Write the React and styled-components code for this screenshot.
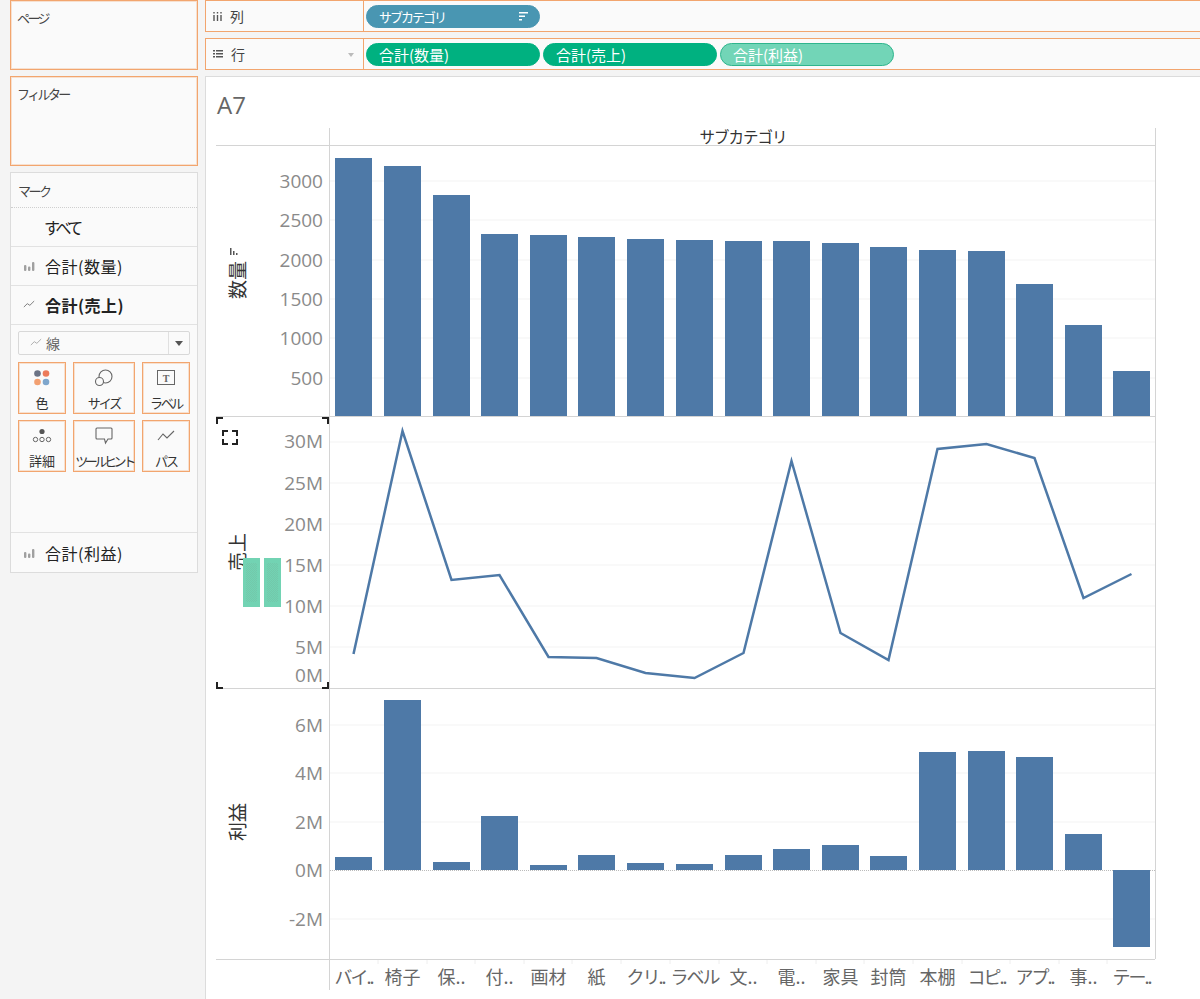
import styled, { createGlobalStyle } from 'styled-components';

const GlobalStyle = createGlobalStyle`
  html, body {
    margin: 0;
    height: 999px;
    overflow: hidden;
    background: #f4f4f4;
    font-family: "Noto Sans CJK JP", "Open Sans", sans-serif;
  }
`;

const ORANGE = '#f2a56e';
const BAR = '#4e79a7';

const categories = ['バイ..', '椅子', '保..', '付..', '画材', '紙', 'クリ..', 'ラベル', '文..', '電..', '家具', '封筒', '本棚', 'コピ..', 'アプ..', '事..', 'テー..'];
const barLeft = [335, 384, 433, 481, 530, 578, 627, 676, 725, 773, 822, 870, 919, 968, 1016, 1065, 1113];
const quantityTops = [158, 166, 195, 234, 235, 237, 239, 240, 241, 241, 243, 247, 250, 251, 284, 325, 371];
const salesY = [654, 431, 580, 575, 657, 658, 673, 678, 653, 461, 633, 660, 449, 444, 458, 598, 574];
const profitTops = [857, 700, 862, 816, 865, 855, 863, 864, 855, 849, 845, 856, 752, 751, 757, 834, 870];

const quantityTicks = [[3000, 181], [2500, 220], [2000, 260], [1500, 299], [1000, 338], [500, 378]];
const salesTicks = [['30M', 442, 441], ['25M', 483, 483], ['20M', 524, 524], ['15M', 565, 565], ['10M', 606, 606], ['5M', 647, 647], ['0M', 688, 675]];
const profitTicks = [['6M', 725], ['4M', 773], ['2M', 822], ['0M', 870], ['-2M', 919]];

const isKana = (text) => /[ァ-ヶー]/.test(text);

const BarGlyph = () => (
  <svg width="12" height="12" viewBox="0 0 12 12">
    <rect x="1" y="5" width="2.4" height="6" rx="1" fill="#a0a0a0" />
    <rect x="5" y="6.500" width="2.4" height="4.500" rx="1" fill="#a0a0a0" />
    <rect x="9" y="2" width="2.4" height="9" rx="1" fill="#a0a0a0" />
  </svg>
);

const LineGlyph = ({ color = '#777' }) => (
  <svg width="12" height="9" viewBox="0 0 14 10">
    <path d="M1 8 L5 4 L8 6 L13 1" fill="none" stroke={color} strokeWidth="1.1" />
  </svg>
);

const ColorIcon = () => (
  <svg width="18" height="18" viewBox="0 0 18 18">
    <circle cx="4.500" cy="4.500" r="3.300" fill="#6b7385" />
    <circle cx="13" cy="4.500" r="3.300" fill="#ec7b5b" />
    <circle cx="4.500" cy="13" r="3.300" fill="#f2a071" />
    <circle cx="13" cy="13" r="3.300" fill="#7ea6cc" />
  </svg>
);

const SizeIcon = () => (
  <svg width="20" height="18" viewBox="0 0 20 18">
    <circle cx="11.500" cy="7.500" r="6.500" fill="none" stroke="#666" strokeWidth="1.1" />
    <circle cx="5.500" cy="12.500" r="4" fill="#fafafa" stroke="#666" strokeWidth="1.1" />
  </svg>
);

const LabelIcon = () => (
  <svg width="18" height="16" viewBox="0 0 18 16">
    <rect x="0.500" y="0.500" width="17" height="14" fill="none" stroke="#666" />
    <text x="9" y="11.500" fontSize="10" fontWeight="700" textAnchor="middle" fill="#666" fontFamily="Liberation Serif, serif">T</text>
  </svg>
);

const DetailIcon = () => (
  <svg width="20" height="16" viewBox="0 0 20 16">
    <circle cx="10" cy="3.500" r="2.600" fill="#555" />
    <circle cx="3.500" cy="11.500" r="2.200" fill="none" stroke="#666" />
    <circle cx="10" cy="11.500" r="2.200" fill="none" stroke="#666" />
    <circle cx="16.500" cy="11.500" r="2.200" fill="none" stroke="#666" />
  </svg>
);

const TooltipIcon = () => (
  <svg width="18" height="18" viewBox="0 0 18 18">
    <path d="M2 1 H16 Q17 1 17 2 V11 Q17 12 16 12 H13 L10.500 16 L9.500 12 H2 Q1 12 1 11 V2 Q1 1 2 1 Z" fill="none" stroke="#666" strokeWidth="1.1" />
  </svg>
);

const PathIcon = () => (
  <svg width="18" height="14" viewBox="0 0 18 14">
    <path d="M1 11 L6 5 L10 9 L17 2" fill="none" stroke="#666" strokeWidth="1.1" />
  </svg>
);

const ColumnsIcon = () => (
  <svg width="9" height="9" viewBox="0 0 9 9">
    <path d="M0.300 0h1.400v1.500H0.300zM3.800 0h1.400v1.500H3.800zM7.300 0h1.400v1.500H7.300z" fill="#555" />
    <path d="M0.300 3h1.400v6H0.300zM3.800 3h1.400v6H3.800zM7.300 3h1.400v6H7.300z" fill="#555" />
  </svg>
);

const RowsIcon = () => (
  <svg width="10" height="8" viewBox="0 0 10 8">
    <path d="M0 0h2v1.500H0zM0 3h2v1.500H0zM0 6h2v1.500H0zM3 0h7v1.500H3zM3 3h7v1.500H3zM3 6h7v1.500H3z" fill="#555" />
  </svg>
);

const SortIcon = () => (
  <svg width="9" height="9" viewBox="0 0 9 9">
    <path d="M0 0h9v1.500H0zM0 3.500h6V5H0zM0 7h3v1.500H0z" fill="#fff" />
  </svg>
);

const markButtons = [
  { label: '色', icon: <ColorIcon /> },
  { label: 'サイズ', icon: <SizeIcon />, spacing: -2 },
  { label: 'ラベル', icon: <LabelIcon />, spacing: -2.400 },
  { label: '詳細', icon: <DetailIcon /> },
  { label: 'ツールヒント', icon: <TooltipIcon />, spacing: -3.400 },
  { label: 'パス', icon: <PathIcon />, spacing: -2 },
];

const Chart = () => (
  <ChartSvg width="995" height="873" viewBox="205 126 995 873">
    {/* gridlines */}
    {quantityTicks.map(([, y]) => <line key={y} x1="330" x2="1155" y1={y} y2={y} stroke="#f3f3f3" />)}
    {salesTicks.slice(0, 6).map(([, y]) => <line key={y} x1="330" x2="1155" y1={y} y2={y} stroke="#f3f3f3" />)}
    {[725, 773, 822, 919].map((y) => <line key={y} x1="330" x2="1155" y1={y} y2={y} stroke="#f3f3f3" />)}

    {/* panes */}
    <line x1="216" x2="1155" y1="145.500" y2="145.500" stroke="#d4d4d4" />
    <line x1="216" x2="1155" y1="416.500" y2="416.500" stroke="#d4d4d4" />
    <line x1="216" x2="1155" y1="688.500" y2="688.500" stroke="#d4d4d4" />
    <line x1="216" x2="1155" y1="959.500" y2="959.500" stroke="#d4d4d4" />
    <line x1="329.500" x2="329.500" y1="128" y2="990" stroke="#d4d4d4" />
    <line x1="1155.500" x2="1155.500" y1="128" y2="959" stroke="#d4d4d4" />
    <line x1="330" x2="1155" y1="870.500" y2="870.500" stroke="#bbb" strokeDasharray="1 1" />
    {barLeft.slice(1).map((x) => <line key={x} x1={x - 6} x2={x - 6} y1="960" y2="964" stroke="#eee" />)}

    {/* bars and line */}
    {barLeft.map((x, i) => <rect key={x} x={x} y={quantityTops[i]} width="37" height={416 - quantityTops[i]} fill={BAR} />)}
    <polyline
      points={barLeft.map((x, i) => `${x + 18.5},${salesY[i]}`).join(' ')}
      fill="none"
      stroke={BAR}
      strokeWidth="2.500"
    />
    {barLeft.map((x, i) => <rect key={x} x={x} y={profitTops[i]} width="37" height={870 - profitTops[i]} fill={BAR} />)}
    <rect x="1113" y="870" width="37" height="77" fill={BAR} />

    {/* axes */}
    {quantityTicks.map(([v, y]) => <Tick key={v} x="323" y={y}>{v}</Tick>)}
    {salesTicks.map(([v, , y]) => <Tick key={v} x="323" y={y}>{v}</Tick>)}
    {profitTicks.map(([v, y]) => <Tick key={v} x="323" y={y}>{v}</Tick>)}

    <AxisTitle transform="rotate(-90 236 280)" x="236" y="280">数量</AxisTitle>
    <path d="M230 255v-7h1.500v7zM233 255v-4h1.500v4zM236 255v-2h1.500v2z" fill="#555" />
    <AxisTitle transform="rotate(-90 236 552)" x="236" y="552">売上</AxisTitle>
    <AxisTitle transform="rotate(-90 236 822)" x="236" y="822">利益</AxisTitle>

    <Header x="743" y="136">サブカテゴリ</Header>
    {categories.map((c, i) => (
      <Category key={c} x={barLeft[i] + 18.5} y="976" $kana={isKana(c)}>{c}</Category>
    ))}
  </ChartSvg>
);

const CORNERS = ['M0 6V0H6', 'M105 0H111V6', 'M0 264V270H6', 'M105 270H111V264'];
const FOCUS = ['M6 18V13H11', 'M15 13H20V18', 'M6 21V26H11', 'M15 26H20V21'];

const App = () => (
  <>
    <GlobalStyle />
    <Page>
      <Sidebar>
        <DropCard $height={70}>ページ</DropCard>
        <DropCard $height={90}>フィルター</DropCard>
        <MarksCard>
          <MarksTitle>マーク</MarksTitle>
          <MarkRow $kana>すべて</MarkRow>
          <MarkRow><BarGlyph />合計(数量)</MarkRow>
          <MarkRow $bold><LineGlyph />合計(売上)</MarkRow>
          <MarkPanel>
            <MarkSelect>
              <SelectValue><LineGlyph color="#aaa" />線</SelectValue>
              <SelectCaret />
            </MarkSelect>
            <MarkButtons>
              {markButtons.map((b) => (
                <MarkButton key={b.label} $spacing={b.spacing}>
                  <IconSlot>{b.icon}</IconSlot>
                  {b.label}
                </MarkButton>
              ))}
            </MarkButtons>
          </MarkPanel>
          <MarkRow><BarGlyph />合計(利益)</MarkRow>
        </MarksCard>
      </Sidebar>
      <Main>
        <Shelf>
          <ShelfLabel><ColumnsIcon />列</ShelfLabel>
          <Pills>
            <Pill $bg="#4996b2" $kana>サブカテゴリ<PillIcon><SortIcon /></PillIcon></Pill>
          </Pills>
        </Shelf>
        <Shelf>
          <ShelfLabel><RowsIcon />行<ShelfCaret /></ShelfLabel>
          <Pills>
            <Pill $bg="#00b180">合計(数量)</Pill>
            <Pill $bg="#00b180">合計(売上)</Pill>
            <Pill $bg="#72d5b7" $border="#2fb58d">合計(利益)</Pill>
          </Pills>
        </Shelf>
        <Viz>
          <VizTitle>A7</VizTitle>
          <Chart />
          <SelectionMarks width="113" height="272" viewBox="-1 -1 113 272">
            {CORNERS.map((d) => <path key={d} d={d} fill="none" stroke="#222" strokeWidth="2" />)}
            {FOCUS.map((d) => <path key={d} d={d} fill="none" stroke="#222" strokeWidth="2" />)}
          </SelectionMarks>
          <DragGhost $left={37} />
          <DragGhost $left={58} />
        </Viz>
      </Main>
    </Page>
  </>
);

const Page = styled.div`
  display: flex;
  gap: 7px;
  height: 999px;
  padding-left: 10px;
  box-sizing: border-box;
`;

const Sidebar = styled.aside`
  width: 188px;
  flex: none;
  display: flex;
  flex-direction: column;
  gap: 6px;
`;

const DropCard = styled.div`
  height: ${(p) => p.$height}px;
  box-sizing: border-box;
  border: 1px solid ${ORANGE};
  box-shadow: inset 0 0 0 1px rgba(242, 165, 110, 0.3);
  background: #fafafa;
  padding: 8px 6px;
  font-size: 13px;
  line-height: 18px;
  letter-spacing: -2.600px;
  color: #444;
`;

const MarksCard = styled.section`
  height: 401px;
  box-sizing: border-box;
  border: 1px solid #dcdcdc;
  background: #fafafa;
  display: flex;
  flex-direction: column;
`;

const MarksTitle = styled.div`
  height: 35px;
  box-sizing: border-box;
  padding: 9px 7px;
  font-size: 13px;
  line-height: 18px;
  letter-spacing: -2.500px;
  color: #444;
  border-bottom: 1px dotted #cfcfcf;
`;

const MarkRow = styled.div`
  height: 39px;
  box-sizing: border-box;
  display: flex;
  align-items: center;
  gap: 10px;
  padding-left: ${(p) => (p.$kana ? 33 : 12)}px;
  font-size: 16px;
  letter-spacing: ${(p) => (p.$kana ? '-3.500px' : '0.5px')};
  font-weight: ${(p) => (p.$bold ? 700 : 400)};
  color: #222;
  border-bottom: 1px solid #e2e2e2;

  &:last-child {
    border-bottom: none;
  }
`;

const MarkPanel = styled.div`
  height: 209px;
  box-sizing: border-box;
  padding: 6px 7px;
  border-bottom: 1px solid #e2e2e2;
`;

const MarkSelect = styled.div`
  height: 24px;
  box-sizing: border-box;
  border: 1px solid #d8d8d8;
  border-radius: 2px;
  display: flex;
  align-items: stretch;
`;

const SelectValue = styled.div`
  flex: 1;
  display: flex;
  align-items: center;
  gap: 4px;
  padding-left: 11px;
  font-size: 14px;
  color: #666;
`;

const SelectCaret = styled.div`
  width: 20px;
  border-left: 1px solid #e0e0e0;
  position: relative;

  &::after {
    content: '';
    position: absolute;
    left: 6px;
    top: 9px;
    border: 4px solid transparent;
    border-top: 5px solid #555;
    border-bottom: none;
  }
`;

const MarkButtons = styled.div`
  display: grid;
  grid-template-columns: 48px 62px 48px;
  grid-auto-rows: 52px;
  column-gap: 7px;
  row-gap: 6px;
  margin-top: 7px;
`;

const MarkButton = styled.div`
  box-sizing: border-box;
  border: 1px solid ${ORANGE};
  box-shadow: inset 0 0 0 1px rgba(242, 165, 110, 0.3);
  display: flex;
  flex-direction: column;
  align-items: center;
  font-size: 13px;
  line-height: 17px;
  letter-spacing: ${(p) => p.$spacing || 0}px;
  white-space: nowrap;
  color: #333;
`;

const IconSlot = styled.div`
  height: 31px;
  display: flex;
  align-items: center;
  justify-content: center;
  letter-spacing: 0;
`;

const Main = styled.main`
  flex: 1;
  min-width: 0;
  display: flex;
  flex-direction: column;
  gap: 6px;
`;

const Shelf = styled.div`
  height: 32px;
  flex: none;
  box-sizing: border-box;
  display: flex;
  background: #fafafa;
  border: 1px solid ${ORANGE};
  border-right: none;
`;

const ShelfLabel = styled.div`
  width: 158px;
  box-sizing: border-box;
  flex: none;
  position: relative;
  display: flex;
  align-items: center;
  gap: 8px;
  padding-left: 7px;
  font-size: 14px;
  color: #444;
  border-right: 1px solid ${ORANGE};
`;

const ShelfCaret = styled.span`
  position: absolute;
  right: 9px;
  top: 14px;
  border: 3.500px solid transparent;
  border-top: 4px solid #bbb;
  border-bottom: none;
`;

const Pills = styled.div`
  display: flex;
  align-items: center;
  gap: 3px;
  padding-left: 2px;
`;

const Pill = styled.div`
  width: 174px;
  height: 23px;
  box-sizing: border-box;
  position: relative;
  display: flex;
  align-items: center;
  padding-left: 12px;
  border-radius: 12px;
  background: ${(p) => p.$bg};
  border: 1px solid ${(p) => p.$border || p.$bg};
  color: #fff;
  font-size: ${(p) => (p.$kana ? 13 : 15)}px;
  letter-spacing: ${(p) => (p.$kana ? '-2px' : '0')};
`;

const PillIcon = styled.span`
  position: absolute;
  right: 11px;
  top: 6px;
  line-height: 0;
`;

const Viz = styled.div`
  flex: 1;
  position: relative;
  background: #fff;
  border-top: 1px solid #dcdcdc;
  border-left: 1px solid #dcdcdc;
`;

const VizTitle = styled.div`
  height: 49px;
  box-sizing: border-box;
  padding: 13px 0 0 11px;
  font-family: "Open Sans", sans-serif;
  font-size: 24px;
  line-height: 30px;
  color: #666;
`;

const ChartSvg = styled.svg`
  display: block;
  margin-left: -1px;
`;

const Tick = styled.text`
  font-family: "Open Sans", sans-serif;
  font-size: 19px;
  fill: #8a8a8a;
  text-anchor: end;
  dominant-baseline: central;
`;

const AxisTitle = styled.text`
  font-size: 19px;
  fill: #333;
  text-anchor: middle;
  dominant-baseline: central;
`;

const Header = styled.text`
  font-size: 15.500px;
  letter-spacing: -1px;
  fill: #333;
  text-anchor: middle;
  dominant-baseline: central;
`;

const Category = styled.text`
  font-size: 18px;
  letter-spacing: ${(p) => (p.$kana ? '-2px' : '0')};
  fill: #666;
  text-anchor: middle;
  dominant-baseline: central;
`;

const SelectionMarks = styled.svg`
  position: absolute;
  left: 9.500px;
  top: 339.500px;
  pointer-events: none;
`;

const DragGhost = styled.div`
  position: absolute;
  left: ${(p) => p.$left}px;
  top: 481px;
  width: 17px;
  height: 49px;
  box-sizing: border-box;
  padding: 5px 3px;
  background:
    conic-gradient(rgba(120, 150, 130, 0.18) 25%, transparent 0 50%, rgba(120, 150, 130, 0.18) 0 75%, transparent 0) 0 0 / 2px 2px content-box,
    #72d3b3;
`;

export default App;
